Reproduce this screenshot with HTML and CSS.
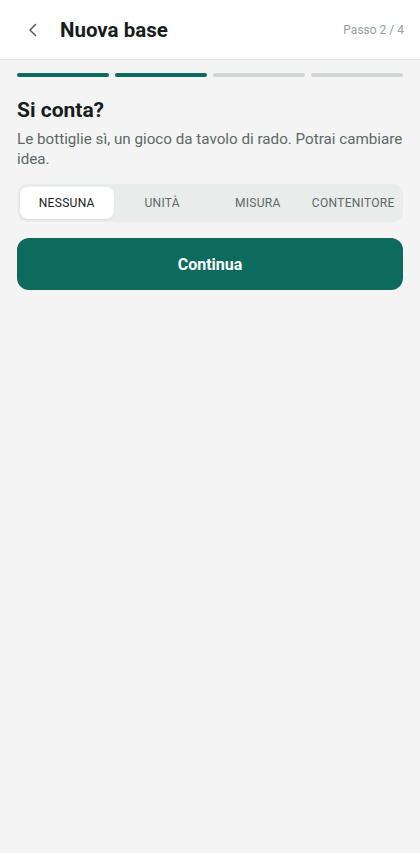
FILE: index.html
```html
<!DOCTYPE html>
<html lang="it">
<head>
<meta charset="utf-8">
<link rel="stylesheet" href="styles.css">
</head>
<body>
<header class="topbar">
  <button class="back" aria-label="Indietro">
    <svg width="16" height="16" viewBox="0 0 16 16"><path d="M10.5 2.5 L5 8 L10.5 13.5" fill="none" stroke="#55605d" stroke-width="1.6" stroke-linecap="round" stroke-linejoin="round"/></svg>
  </button>
  <h1 class="title">Nuova base</h1>
  <span class="step">Passo 2 / 4</span>
</header>
<main class="content">
  <div class="progress">
    <span class="seg done"></span>
    <span class="seg done"></span>
    <span class="seg"></span>
    <span class="seg"></span>
  </div>
  <h2 class="question">Si conta?</h2>
  <p class="hint">Le bottiglie sì, un gioco da tavolo di rado. Potrai cambiare idea.</p>
  <div class="segmented">
    <button class="opt active">NESSUNA</button>
    <button class="opt">UNITÀ</button>
    <button class="opt">MISURA</button>
    <button class="opt">CONTENITORE</button>
  </div>
  <button class="primary">Continua</button>
</main>
</body>
</html>
```
FILE: styles.css
```css
* { box-sizing: border-box; }
html, body { margin: 0; padding: 0; }
body {
  font-family: Roboto, "Noto Sans", sans-serif;
  background: #f3f4f3;
  color: #1a2220;
  min-height: 853px;
}
.topbar {
  height: 60px;
  background: #ffffff;
  border-bottom: 1px solid #e4e7e6;
  display: flex;
  align-items: center;
  padding: 0 16px 0 24px;
}
.back {
  width: 18px; height: 18px; padding: 0;
  border: 0; background: none;
  display: flex; align-items: center; justify-content: center;
  margin-right: 18px;
}
.title {
  margin: 0;
  font-size: 20.5px;
  font-weight: 700;
  color: #161d1b;
  flex: 1;
}
.step {
  font-size: 12px;
  color: #97a09d;
}
.content {
  padding: 13px 17px 0;
}
.progress {
  display: flex;
  gap: 6px;
}
.seg {
  flex: 1;
  height: 4px;
  border-radius: 2px;
  background: #cfd6d4;
}
.seg.done { background: #0d6b5e; }
.question {
  margin: 19px 0 0;
  font-size: 21px;
  font-weight: 700;
  color: #161d1b;
  line-height: 28px;
}
.hint {
  margin: 5px 0 0;
  font-size: 15.2px;
  line-height: 20px;
  color: #5d6966;
}
.segmented {
  margin-top: 15px;
  background: #e8ecea;
  border-radius: 10px;
  padding: 3px;
  display: flex;
  gap: 2px;
  height: 38px;
}
.opt {
  flex: 1;
  border: 0;
  background: transparent;
  border-radius: 8px;
  font-family: inherit;
  font-size: 12px;
  letter-spacing: 0.3px;
  color: #5d6966;
  padding: 0;
}
.opt.active {
  background: #ffffff;
  color: #1a2220;
  box-shadow: 0 1px 2px rgba(0,0,0,0.06);
}
.primary {
  margin-top: 16px;
  width: 100%;
  height: 52px;
  border: 0;
  border-radius: 12px;
  background: #0d6b5e;
  color: #ffffff;
  font-family: inherit;
  font-size: 16px;
  font-weight: 700;
}
```
